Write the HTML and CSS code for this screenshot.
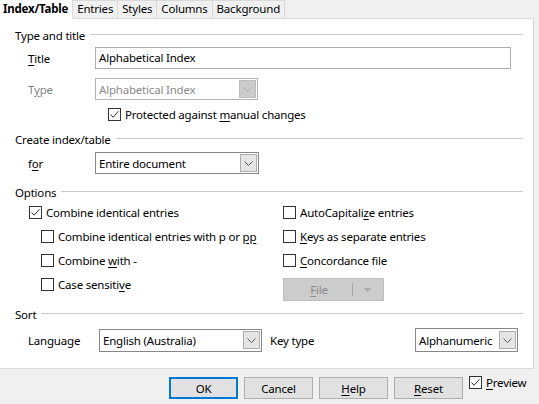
FILE: index.html
```html
<!DOCTYPE html>
<html>
<head>
<meta charset="utf-8">
<title>Index/Table</title>
<link rel="stylesheet" href="styles.css">
</head>
<body>
<div class="dialog">
  <div class="tabs">
    <div class="tab active">Index/Table</div>
    <div class="tab">Entries</div>
    <div class="tab">Styles</div>
    <div class="tab">Columns</div>
    <div class="tab">Background</div>
  </div>
  <div class="panel">
    <div class="hdr hdr-1"><span>Type and title</span></div>
    <div class="row row-title">
      <span class="lbl"><u>T</u>itle</span>
      <div class="input w-title">Alphabetical Index</div>
    </div>
    <div class="row row-type">
      <span class="lbl dis">T<u>y</u>pe</span>
      <div class="select dis w-type"><span>Alphabetical Index</span><span class="drop"><svg width="9" height="5" viewBox="0 0 9 5"><path d="M0.5 0.5 L4.5 4.5 L8.5 0.5" fill="none" stroke="currentColor" stroke-width="1"/></svg></span></div>
    </div>
    <div class="row row-protect">
      <span class="cb"><svg width="11" height="11" viewBox="0 0 11 11"><path d="M1.5 5.5 L4.2 8.2 L9.5 2.2" fill="none" stroke="#333" stroke-width="1"/></svg></span>
      <span>Protected against <u>m</u>anual changes</span>
    </div>

    <div class="hdr hdr-2"><span>Create index/table</span></div>
    <div class="row row-for">
      <span class="lbl">f<u>o</u>r</span>
      <div class="select w-for"><span>Entire document</span><span class="drop"><svg width="9" height="5" viewBox="0 0 9 5"><path d="M0.5 0.5 L4.5 4.5 L8.5 0.5" fill="none" stroke="currentColor" stroke-width="1"/></svg></span></div>
    </div>

    <div class="hdr hdr-3"><span>Options</span></div>
    <div class="opts">
      <div class="opt"><span class="cb"><svg width="11" height="11" viewBox="0 0 11 11"><path d="M1.5 5.5 L4.2 8.2 L9.5 2.2" fill="none" stroke="#333" stroke-width="1"/></svg></span><span>Combine identical entries</span></div>
      <div class="opt"><span class="cb"></span><span>AutoCapitali<u>z</u>e entries</span></div>
      <div class="opt sub"><span class="cb"></span><span>Combine identical entries with p or <u>pp</u></span></div>
      <div class="opt"><span class="cb"></span><span><u>K</u>eys as separate entries</span></div>
      <div class="opt sub"><span class="cb"></span><span>Combine <u>w</u>ith -</span></div>
      <div class="opt"><span class="cb"></span><span><u>C</u>oncordance file</span></div>
      <div class="opt sub opt-case"><span class="cb"></span><span>Case sensiti<u>v</u>e</span></div>
      <div class="opt opt-file">
        <div class="filebtn"><span class="flab"><u>F</u>ile</span><span class="fsep"></span><span class="farr"><svg width="7" height="4" viewBox="0 0 7 4"><path d="M0 0 L7 0 L3.5 4 Z" fill="#a8a8a8"/></svg></span></div>
      </div>
    </div>

    <div class="hdr hdr-4"><span>Sort</span></div>
    <div class="row row-lang">
      <span class="lbl lbl-lang">Language</span>
      <div class="select w-lang"><span>English (Australia)</span><span class="drop"><svg width="9" height="5" viewBox="0 0 9 5"><path d="M0.5 0.5 L4.5 4.5 L8.5 0.5" fill="none" stroke="currentColor" stroke-width="1"/></svg></span></div>
      <span class="lbl lbl-key">Key type</span>
      <div class="select w-key"><span>Alphanumeric</span><span class="drop"><svg width="9" height="5" viewBox="0 0 9 5"><path d="M0.5 0.5 L4.5 4.5 L8.5 0.5" fill="none" stroke="currentColor" stroke-width="1"/></svg></span></div>
    </div>
  </div>

  <div class="footer">
    <div class="btn default">OK</div>
    <div class="btn">Cancel</div>
    <div class="btn"><u>H</u>elp</div>
    <div class="btn"><u>R</u>eset</div>
    <div class="preview"><span class="cb"><svg width="11" height="11" viewBox="0 0 11 11"><path d="M1.5 5.5 L4.2 8.2 L9.5 2.2" fill="none" stroke="#333" stroke-width="1"/></svg></span><span><u>P</u>review</span></div>
  </div>
</div>
</body>
</html>
```

FILE: styles.css
```css
html, body {
  margin: 0;
  padding: 0;
}
body {
  background: #f0f0f0;
  font-family: "Noto Sans", "Open Sans", sans-serif;
  font-size: 11.5px;
  letter-spacing: -0.2px;
  color: #000;
  width: 539px;
  height: 404px;
  overflow: hidden;
}
u {
  text-decoration: underline;
  text-underline-offset: 2px;
}

.tabs {
  display: flex;
  height: 18px;
  position: relative;
  z-index: 1;
}
.tab {
  box-sizing: border-box;
  height: 18px;
  line-height: 16px;
  padding: 0 4px 0 4px;
  background: #f0f0f0;
  border: 1px solid #d9d9d9;
  border-bottom: none;
  margin-left: -1px;
  white-space: nowrap;
}
.tab.active {
  background: #fff;
  font-weight: bold;
  border-color: #fff;
  margin-left: 0;
  padding: 0 4px 0 2px;
  height: 19px;
}

.panel {
  box-sizing: border-box;
  width: 534px;
  height: 351px;
  background: #fff;
  border: 1px solid #d9d9d9;
  border-left-color: #fff;
  display: flex;
  flex-direction: column;
}

.hdr {
  display: flex;
  align-items: center;
  height: 16px;
  padding-left: 14px;
  margin-right: 10px;
  white-space: nowrap;
}
.hdr::after {
  content: "";
  flex: 1;
  height: 1px;
  background: #c9c9c9;
  margin-left: 5px;
  margin-top: -1px;
}
.hdr-1 { margin-top: 8px; }
.hdr-2 { margin-top: 9px; }
.hdr-3 { margin-top: 10px; }
.hdr-4 { margin-top: 4px; }

.row {
  display: flex;
  align-items: center;
  padding-left: 27px;
  white-space: nowrap;
}
.lbl {
  width: 67px;
}
.lbl.dis {
  color: #838383;
}
.row-title { margin-top: 4px; height: 22px; }
.row-type { margin-top: 9px; height: 22px; }
.row-protect { margin-top: 7px; height: 15px; padding-left: 107px; }
.row-for { margin-top: 5px; height: 22px; }
.row-lang { margin-top: 6px; height: 24px; }

.input {
  box-sizing: border-box;
  height: 22px;
  border: 1px solid #acacac;
  padding-left: 3px;
  line-height: 20px;
  background: #fff;
}
.w-title { width: 416px; }

.select {
  box-sizing: border-box;
  height: 22px;
  border: 1px solid #878787;
  background: #fff;
  display: flex;
  align-items: center;
  padding-left: 3px;
  padding-right: 1px;
  color: #000;
}
.select > span:first-child {
  flex: 1;
  overflow: hidden;
}
.select .drop {
  box-sizing: border-box;
  width: 17px;
  height: 18px;
  background: #e5e5e5;
  border: 1px solid #acacac;
  display: flex;
  align-items: center;
  justify-content: center;
  color: #555;
}
.select.dis {
  border-color: #b4b4b4;
  color: #8a8a8a;
}
.select.dis .drop {
  background: #cccccc;
  border-color: #bcbcbc;
  color: #a8a8a8;
}
.w-type { width: 163px; height: 22px; }
.w-for { width: 164px; }
.lbl-lang { width: 71px; }
.w-lang { width: 163px; height: 23px; }
.lbl-key { width: 145px; margin-left: 8px; }
.w-key { width: 103px; height: 24px; }

.cb {
  box-sizing: border-box;
  width: 13px;
  height: 13px;
  border: 1px solid #333;
  background: #fff;
  display: inline-flex;
  align-items: center;
  justify-content: center;
  margin-right: 4px;
  flex: none;
}

.opts {
  display: grid;
  grid-template-columns: 254px 1fr;
  grid-template-rows: 24px 24px 24px 30px;
  padding-left: 28px;
}
.opt {
  display: flex;
  align-items: center;
  white-space: nowrap;
}
.opt.sub {
  padding-left: 12px;
}
.opt-case {
  align-self: start;
  height: 24px;
}
.opt-file {
  align-items: flex-end;
  padding-bottom: 1px;
}
.filebtn {
  box-sizing: border-box;
  width: 101px;
  height: 23px;
  background: #cccccc;
  border: 1px solid #bfbfbf;
  display: flex;
  align-items: center;
  color: #8a8a8a;
}
.flab {
  flex: 1;
  text-align: center;
  padding-left: 2px;
}
.fsep {
  width: 1px;
  height: 13px;
  background: #a8a8a8;
}
.farr {
  width: 28px;
  display: flex;
  justify-content: center;
  padding-right: 2px;
}

.footer {
  display: flex;
  align-items: flex-start;
  gap: 6px;
  padding: 8px 0 0 169px;
}
.btn {
  box-sizing: border-box;
  width: 69px;
  height: 22px;
  background: #e1e1e1;
  border: 1px solid #adadad;
  display: flex;
  align-items: center;
  justify-content: center;
}
.btn.default {
  border: 2px solid #0078d7;
}
.preview {
  display: flex;
  align-items: center;
  margin-top: -2px;
  white-space: nowrap;
}
.preview .cb {
  margin-right: 4px;
}
```
